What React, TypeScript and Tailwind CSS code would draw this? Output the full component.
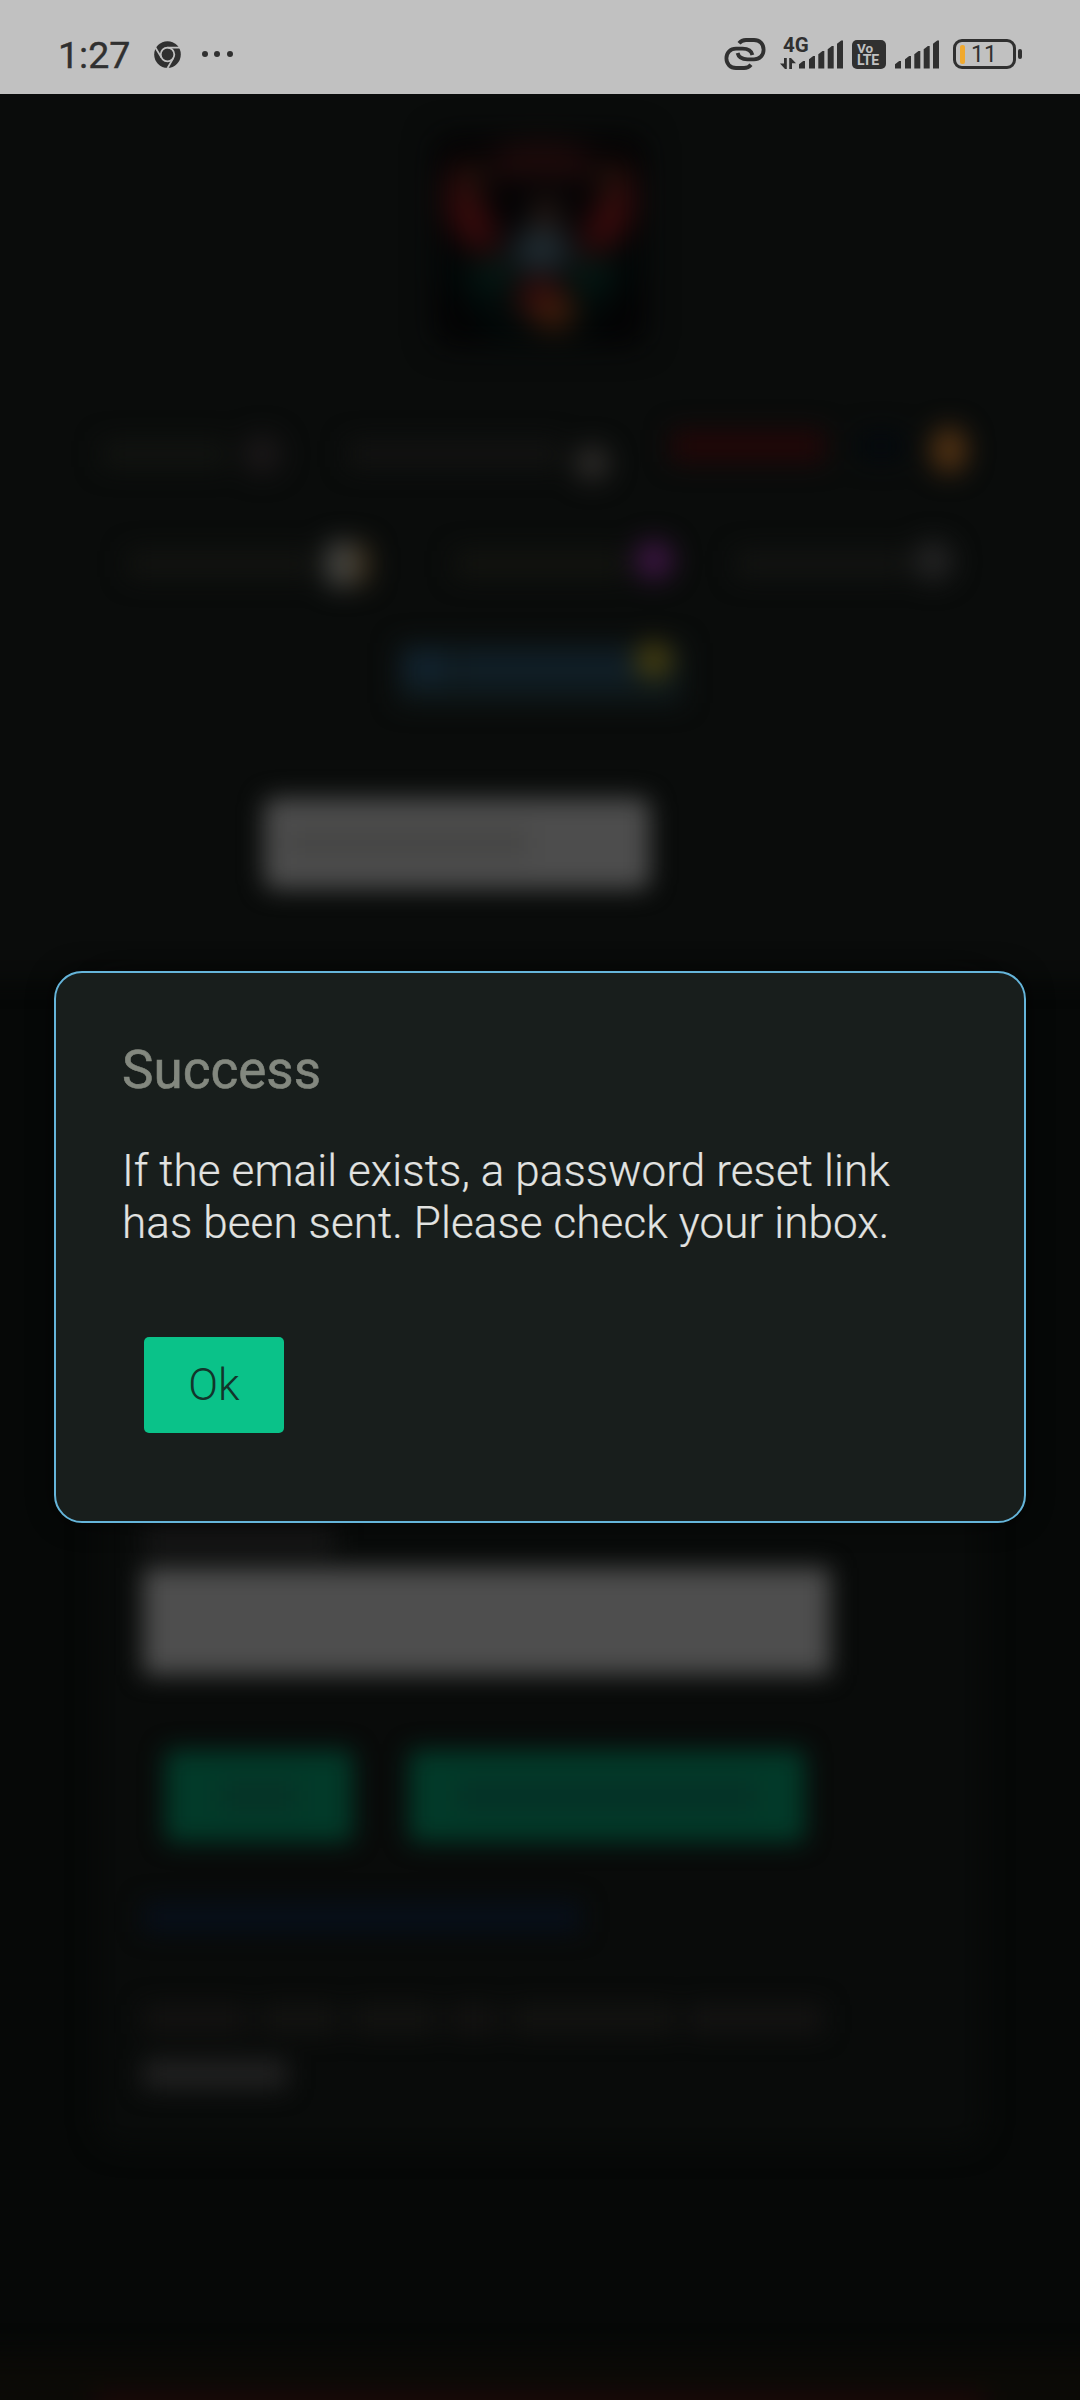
import React from "react";

const INK = "#303030";

function ChromeIcon() {
  return (
    <svg className="mt-[40.500px] ml-[25px] h-[27px] w-[27px] shrink-0" viewBox="0 0 27 27">
      <circle cx="13.5" cy="13.5" r="13.3" fill={INK} />
      <circle cx="13.5" cy="13.5" r="6.8" fill="none" stroke="#c1c1c1" strokeWidth="1.8" />
      <path d="M13.5 6.7H26M7.6 16.9L1.2 6.2M19.4 16.9L13.6 27" stroke="#c1c1c1" strokeWidth="1.8" fill="none" />
    </svg>
  );
}

function LinkIcon() {
  return (
    <svg className="mt-[37px] h-[34px] w-[42px] shrink-0" viewBox="0 0 42 34" fill="none" stroke={INK} strokeWidth="3.8">
      <path d="M15 6.200C16.800 4 19 3 22 3h8c5.600 0 9.600 4 9.600 9.700S35.600 22.300 30 22.300h-6.500C18.300 22.300 14.500 20 13.600 16" />
      <path d="M27 27.800C25.200 30 23 31 20 31h-8C6.400 31 2.400 27 2.400 21.300S6.400 11.700 12 11.700h6.500C23.700 11.700 27.500 14 28.400 18" />
    </svg>
  );
}

const BARS = [
  { x: 0, top: 21 },
  { x: 10, top: 16 },
  { x: 19.3, top: 11 },
  { x: 28.7, top: 6 },
  { x: 38, top: 0.5 },
];

function SignalBars({ className }: { className: string }) {
  return (
    <svg className={className} viewBox="0 0 44 29">
      {BARS.map((b) => (
        <path key={b.x} d={`M${b.x} 28.500V${b.top + 3.2}L${b.x + 4.2} ${b.top}H${b.x + 6}V28.500Z`} fill={INK} />
      ))}
    </svg>
  );
}

function StatusBar() {
  return (
    <div className="flex h-[94px] w-full items-start bg-[#c1c1c1] pl-[58px] text-[#303030]">
      <span className="mt-[34px] w-[71px] text-[37.500px] leading-[42px] font-normal whitespace-nowrap [-webkit-text-stroke:0.4px_#303030]">
        1:27
      </span>
      <ChromeIcon />
      <div className="mt-[51px] ml-[21px] flex gap-[6.300px]">
        <i className="size-[6px] rounded-full bg-[#303030]" />
        <i className="size-[6px] rounded-full bg-[#303030]" />
        <i className="size-[6px] rounded-full bg-[#303030]" />
      </div>
      <div className="flex-1" />
      <LinkIcon />
      <div className="mt-[37px] ml-[14px] w-[19px]">
        <div className="ml-[3px] text-[20.500px] leading-[17px] font-bold whitespace-nowrap">4G</div>
        <svg className="mt-[4px] h-[11px] w-[16px]" viewBox="0 0 16 11">
          <path d="M4 0H6.800V11H5L0 5.500H4ZM9.200 11V0H11L16 5.200H12V11Z" fill={INK} />
        </svg>
      </div>
      <SignalBars className="mt-[40px] h-[29px] w-[44px] shrink-0" />
      <div className="mt-[40px] ml-[9px] h-[29px] w-[34px] rounded-[5px] bg-[#303030] pl-[5px] font-bold text-[#c1c1c1]">
        <div className="pt-[3px] text-[13.500px] leading-[11px]">Vo</div>
        <div className="text-[14px] leading-[13px] tracking-[-0.2px]">LTE</div>
      </div>
      <SignalBars className="mt-[40px] ml-[9px] h-[29px] w-[44px] shrink-0" />
      <div className="mt-[39px] ml-[14px] flex h-[30px] w-[63px] items-center rounded-[9px] border-[3px] border-[#303030] pl-[4px]">
        <i className="h-[19px] w-[5px] rounded-[2px] bg-[#f0a92f]" />
        <span className="ml-[6px] pt-[2px] text-[23px] leading-[24px]">11</span>
      </div>
      <i className="mt-[49px] mr-[58px] ml-[2px] h-[10px] w-[4px] rounded-[2px] bg-[#303030]" />
    </div>
  );
}

function Logo() {
  return (
    <svg className="mx-auto h-[212px] w-[212px] overflow-visible blur-[15px]" viewBox="0 0 212 212">
      <rect width="212" height="212" rx="14" fill="#030304" />
      <path d="M10 95Q30 150 100 165Q170 150 200 95L200 140L150 205H60L10 140Z" fill="#020a09" />
      <path d="M55 20Q106 0 160 20L155 46Q106 36 60 46Z" fill="#220c0c" />
      <path d="M24 24Q0 70 26 105L60 125Q68 95 48 68Z" fill="#390b0c" />
      <path d="M188 24Q212 70 186 105L150 125Q144 95 165 68Z" fill="#390b0c" />
      <ellipse cx="38" cy="45" rx="12" ry="18" fill="#24130c" />
      <ellipse cx="176" cy="45" rx="12" ry="18" fill="#24130c" />
      <ellipse cx="112" cy="82" rx="16" ry="22" fill="#241713" />
      <ellipse cx="107" cy="116" rx="30" ry="22" fill="#1f2b31" />
      <ellipse cx="60" cy="140" rx="22" ry="16" fill="#051a15" />
      <ellipse cx="155" cy="140" rx="22" ry="16" fill="#051a15" />
      <ellipse cx="106" cy="164" rx="24" ry="20" fill="#360c0d" />
      <ellipse cx="120" cy="178" rx="20" ry="17" fill="#451e0b" />
    </svg>
  );
}

function Header() {
  return (
    <header className="relative h-[886px] shrink-0">
      <div className="absolute -inset-x-[40px] -top-[40px] bottom-0 bg-[#0a0c0b] blur-[12px]" />
      <div className="relative pt-[40px]">
        <Logo />
        <nav className="blur-[13px]">
          <div className="mt-[78px] flex h-[60px] items-center pl-[102px]">
            <i className="h-[26px] w-[125px] bg-[#121411]" />
            <i className="ml-[15px] size-[40px] rounded-full bg-[#1a1718]" />
            <i className="ml-[66px] h-[26px] w-[212px] bg-[#131312]" />
            <i className="mt-[18px] ml-[14px] size-[36px] rounded-full bg-[#2c2a28]" />
            <i className="mb-[16px] ml-[61px] h-[32px] w-[154px] bg-[#220708]" />
            <i className="mb-[16px] ml-[34px] h-[28px] w-[44px] bg-[#04090e]" />
            <i className="mb-[8px] ml-[28px] h-[46px] w-[36px] rounded-[45%] bg-[#503113]" />
          </div>
          <div className="mt-[50px] flex h-[60px] items-center pl-[128px]">
            <i className="h-[26px] w-[185px] bg-[#131411]" />
            <i className="ml-[12px] h-[46px] w-[28px] rounded-l-[12px] bg-[#444441]" />
            <i className="h-[42px] w-[17px] rounded-r-[8px] bg-[#3c301d]" />
            <i className="ml-[85px] h-[26px] w-[170px] bg-[#131410]" />
            <i className="mb-[8px] ml-[9px] size-[40px] rounded-full bg-[#39153f]" />
            <i className="ml-[62px] h-[26px] w-[170px] bg-[#131412]" />
            <i className="mb-[6px] ml-[6px] size-[42px] rounded-full bg-[#222222]" />
          </div>
          <div className="mx-auto mt-[49px] flex h-[60px] w-[284px] items-start bg-[#0f191b] pt-[8px]">
            <i className="ml-[5px] h-[32px] w-[45px] bg-[#11222e]" />
            <i className="ml-[10px] h-[32px] w-[175px] bg-[#101e27]" />
            <i className="-mt-[8px] ml-[4px] size-[34px] rotate-45 rounded-[10px] bg-[#443d10]" />
          </div>
        </nav>
        <div className="mt-[95px] ml-[264px] h-[91px] w-[386px] rounded-[10px] bg-[#4d4d4d] pt-[30px] pl-[24px] blur-[12px]">
          <i className="block h-[30px] w-[240px] bg-[#464645]" />
        </div>
      </div>
    </header>
  );
}

function LoginCard() {
  return (
    <div className="relative mx-auto h-[1168px] w-[890px] shrink-0">
      <div className="absolute inset-0 rounded-[28px] bg-[#090b0a] blur-[13px]" />
      <div className="relative pt-[545px] pl-[48px] blur-[12px]">
        <i className="block h-[28px] w-[192px] bg-[#171717]" />
        <div className="mt-[15px] h-[107px] w-[687px] bg-[#4e4e4e]" />
        <div className="mt-[75px] ml-[22px] flex gap-[56px]">
          <div className="flex h-[92px] w-[188px] items-center justify-center rounded-[6px] bg-[#023a29]">
            <i className="h-[30px] w-[76px] bg-[#063226]" />
          </div>
          <div className="flex h-[92px] w-[396px] items-center justify-center rounded-[6px] bg-[#023a29]">
            <i className="h-[30px] w-[300px] bg-[#053126]" />
          </div>
        </div>
        <i className="mt-[60px] block h-[30px] w-[438px] bg-[#070f1a]" />
        <div className="mt-[73px] flex gap-[12px]">
          <i className="h-[28px] w-[105px] bg-[#131211]" />
          <i className="h-[28px] w-[80px] bg-[#131311]" />
          <i className="h-[28px] w-[85px] bg-[#131311]" />
          <i className="h-[28px] w-[50px] bg-[#131211]" />
          <i className="h-[28px] w-[165px] bg-[#131311]" />
          <i className="h-[28px] w-[135px] bg-[#141312]" />
        </div>
        <i className="mt-[26px] block h-[30px] w-[144px] bg-[#212121]" />
      </div>
    </div>
  );
}

function SuccessDialog() {
  return (
    <div
      role="dialog"
      className="absolute top-[877px] left-[54px] h-[552px] w-[972px] rounded-[28px] border-2 border-[#65b5da] bg-[#181e1c] pt-[66px] pl-[66px] shadow-[0_0_26px_2px_rgba(0,0,0,0.45)]"
    >
      <h2 className="text-[53px] leading-[62px] font-[450] text-[#83887f] [-webkit-text-stroke:0.6px_#83887f]">Success</h2>
      <p className="mt-[44px] text-[44px] leading-[52px] font-light tracking-[0.1px] whitespace-nowrap text-[#e2e3e1] [-webkit-text-stroke:0.2px_#e2e3e1]">
        If the email exists, a password reset link
        <br />
        has been sent. Please check your inbox.
      </p>
      <button className="mt-[88px] ml-[22px] block h-[96px] w-[140px] rounded-[5px] bg-[#0ac289] text-[44px] leading-[94px] font-light text-[#12352b]">
        Ok
      </button>
    </div>
  );
}

export default function App() {
  return (
    <div className="h-[2400px] w-[1080px] overflow-hidden bg-[#060807] font-['Roboto',sans-serif]">
      <StatusBar />
      <main className="relative flex h-[2306px] flex-col overflow-hidden">
        <Header />
        <LoginCard />
        <footer className="-mx-[30px] mt-[206px] h-[120px] shrink-0 bg-[#0b0a06] px-[125px] pt-[38px] blur-[13px]">
          <div className="h-[80px] bg-[#1a0808]" />
        </footer>
        <SuccessDialog />
      </main>
    </div>
  );
}
